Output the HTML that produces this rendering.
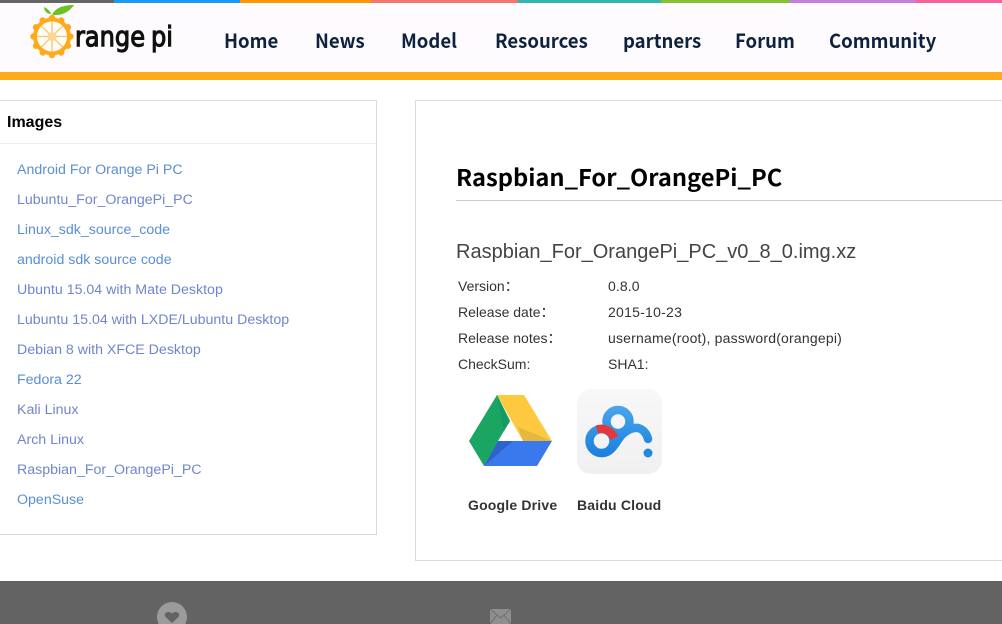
<!DOCTYPE html>
<html><head><meta charset="utf-8">
<style>
html,body{margin:0;padding:0;width:1002px;height:624px;overflow:hidden;background:#fff;font-family:"Liberation Sans",sans-serif}
.a{position:absolute;white-space:nowrap}
.bar{position:absolute;top:0;height:3px}
.nav{position:absolute;top:26px;font:bold 19.5px/28px "Noto Sans CJK SC","Liberation Sans",sans-serif;color:#0e2240;white-space:nowrap;transform-origin:left center;transform:scaleX(.95)}
.l{position:absolute;left:17px;margin-top:1px;font-size:14.2px;line-height:20px;color:#5a8fd2;white-space:nowrap}
.v{color:#6f86cc}
.t{position:absolute;font-size:14px;line-height:20px;color:#333;white-space:nowrap}
</style></head><body>
<div style="position:absolute;left:0;top:0;width:1002px;height:80px;background:#fdfbfd"></div>
<div class="bar" style="left:0;width:114px;background:#666"></div>
<div class="bar" style="left:114px;width:126px;background:#1b9af5"></div>
<div class="bar" style="left:240px;width:131px;background:#ff9800"></div>
<div class="bar" style="left:371px;width:147px;background:#f2766b"></div>
<div class="bar" style="left:518px;width:143px;background:#35b5ad"></div>
<div class="bar" style="left:661px;width:129px;background:#86c133"></div>
<div class="bar" style="left:790px;width:126px;background:#c27fe0"></div>
<div class="bar" style="left:916px;width:86px;background:#f7619b"></div>
<div style="position:absolute;left:0;top:72px;width:1002px;height:8px;background:#ffa91c"></div>

<svg class="a" style="left:28px;top:3px" width="50" height="56" viewBox="0 0 50 56">
<path d="M23 11C22 8 20 6 16 4C16 8 19 11 23 11Z" fill="#6cc024"/>
<path d="M24 12C27 5 35 2 46 2C42 8 35 13 24 12Z" fill="#6cc024"/>
<circle cx="24" cy="33.500" r="19" fill="#ffa91c"/>
<g fill="#ffa91c"><circle cx="24" cy="15" r="3.200"/><circle cx="33.250" cy="17.500" r="3.200"/><circle cx="40" cy="24.250" r="3.200"/><circle cx="42.500" cy="33.500" r="3.200"/><circle cx="40" cy="42.750" r="3.200"/><circle cx="33.250" cy="49.500" r="3.200"/><circle cx="24" cy="52" r="3.200"/><circle cx="14.750" cy="49.500" r="3.200"/><circle cx="8" cy="42.750" r="3.200"/><circle cx="5.500" cy="33.500" r="3.200"/><circle cx="8" cy="24.250" r="3.200"/><circle cx="14.750" cy="17.500" r="3.200"/></g>
<circle cx="24" cy="33.500" r="15" fill="#fffdf8"/>
<g stroke="#ffc266" stroke-width="1.300"><path d="M24 18.500V48.500M9 33.500H39M13.400 22.900L34.600 44.100M34.600 22.900L13.400 44.100"/></g>
<circle cx="24" cy="33.500" r="4.500" fill="#ffd596"/>
</svg>
<div class="a" style="left:75px;top:15px;font:28px/44px 'DejaVu Sans',sans-serif;color:#111;-webkit-text-stroke:1.2px #111;word-spacing:-2px;transform-origin:left top;transform:scaleX(.86)">range pi</div>

<div class="nav" style="left:224px">Home</div>
<div class="nav" style="left:315px">News</div>
<div class="nav" style="left:401px">Model</div>
<div class="nav" style="left:495px">Resources</div>
<div class="nav" style="left:623px">partners</div>
<div class="nav" style="left:735px">Forum</div>
<div class="nav" style="left:829px">Community</div>

<div style="position:absolute;left:-2px;top:100px;width:377px;height:433px;border:1px solid #d9d9d9"></div>
<div style="position:absolute;left:0;top:143px;width:376px;height:1px;background:#eee"></div>
<div class="a" style="left:7px;top:113px;font:bold 16px/20px 'Liberation Sans',sans-serif;color:#000">Images</div>
<div class="l" style="top:159px">Android For Orange Pi PC</div>
<div class="l v" style="top:189px">Lubuntu_For_OrangePi_PC</div>
<div class="l" style="top:219px">Linux_sdk_source_code</div>
<div class="l" style="top:249px">android sdk source code</div>
<div class="l v" style="top:279px">Ubuntu 15.04 with Mate Desktop</div>
<div class="l v" style="top:309px">Lubuntu 15.04 with LXDE/Lubuntu Desktop</div>
<div class="l v" style="top:339px">Debian 8 with XFCE Desktop</div>
<div class="l" style="top:369px">Fedora 22</div>
<div class="l v" style="top:399px">Kali Linux</div>
<div class="l v" style="top:429px">Arch Linux</div>
<div class="l v" style="top:459px">Raspbian_For_OrangePi_PC</div>
<div class="l" style="top:489px">OpenSuse</div>

<div style="position:absolute;left:415px;top:100px;width:600px;height:459px;border:1px solid #d9d9d9"></div>
<div class="a" style="left:456px;top:159px;font:bold 23px/34px 'Noto Sans CJK SC','Liberation Sans',sans-serif;color:#000;transform-origin:left center;transform:scaleX(1.03)">Raspbian_For_OrangePi_PC</div>
<div style="position:absolute;left:456px;top:200px;width:546px;height:1px;background:#ccc"></div>
<div class="a" style="left:456px;top:238px;font-size:20px;line-height:28px;color:#444">Raspbian_For_OrangePi_PC_v0_8_0.img.xz</div>

<div class="t" style="left:458px;top:276px">Version：</div><div class="t" style="left:608px;top:276px;letter-spacing:.1px">0.8.0</div>
<div class="t" style="left:458px;top:302px">Release date：</div><div class="t" style="left:608px;top:302px;letter-spacing:.25px">2015-10-23</div>
<div class="t" style="left:458px;top:328px">Release notes：</div><div class="t" style="left:608px;top:328px;letter-spacing:.2px">username(root), password(orangepi)</div>
<div class="t" style="left:458px;top:354px">CheckSum:</div><div class="t" style="left:608px;top:354px">SHA1:</div>

<svg class="a" style="left:465px;top:390px" width="92" height="80" viewBox="0 0 92 80">
<path d="M32 5H59L87 51H58Z" fill="#fdc93f"/>
<path d="M4 51L32 5L45 31L33 51L19 76Z" fill="#1aa562"/>
<path d="M33 51H87L72 76H19Z" fill="#3a79ed"/>
<path d="M32 5L45 31L39 41Z" fill="#179a62"/>
<path d="M58 51L53 37L87 51Z" fill="#e6b840"/>
<path d="M33 51H48L19 76Z" fill="#2d64cc"/>
</svg>

<svg class="a" style="left:577px;top:389px" width="85" height="85" viewBox="0 0 85 85">
<defs><linearGradient id="g" gradientUnits="userSpaceOnUse" x1="0" y1="17" x2="0" y2="68"><stop offset="0" stop-color="#4aa5ec"/><stop offset="1" stop-color="#1a80dc"/></linearGradient>
<linearGradient id="bg" x1="0" y1="0" x2="0" y2="1"><stop offset="0" stop-color="#f8f8f8"/><stop offset="1" stop-color="#f0f0f0"/></linearGradient></defs>
<rect width="85" height="85" rx="14" fill="url(#bg)"/>
<g fill="none">
<circle cx="41" cy="32.500" r="11.500" stroke="url(#g)" stroke-width="8.500"/>
<circle cx="24.500" cy="52" r="12" stroke="url(#g)" stroke-width="8.500"/>
<path d="M25 64C34 64 38 55 43 48C48 42 55 38 61 39C66 40 70 45 71 50" stroke="url(#g)" stroke-width="8.500" stroke-linecap="round"/>
<path d="M20 40.500C28 38 34.500 43 37.500 49" stroke="#e4383f" stroke-width="8.500"/>
</g>
<circle cx="71" cy="64" r="4.500" fill="#1f8be0"/>
</svg>

<div class="a" style="left:468px;top:495px;font:bold 14px/20px 'Liberation Sans',sans-serif;color:#333;letter-spacing:.18px">Google Drive</div>
<div class="a" style="left:577px;top:495px;font:bold 14px/20px 'Liberation Sans',sans-serif;color:#333;letter-spacing:.18px">Baidu Cloud</div>

<div style="position:absolute;left:0;top:581px;width:1002px;height:43px;background:#636363"></div>
<svg class="a" style="left:157px;top:602px" width="30" height="22" viewBox="0 0 30 22">
<circle cx="15" cy="15" r="15" fill="#9b9b9b"/>
<path d="M15 21L8.500 15C6 11 11 8 15 11.500C19 8 24 11 21.500 15Z" fill="#636363"/>
</svg>
<svg class="a" style="left:490px;top:609px" width="21" height="15" viewBox="0 0 21 15">
<rect width="21" height="15" fill="#8f8f8f"/>
<path d="M0 0L10.500 9L21 0M0 15L7 6M21 15L14 6" fill="none" stroke="#6f6f6f" stroke-width="1"/>
</svg>
</body></html>
